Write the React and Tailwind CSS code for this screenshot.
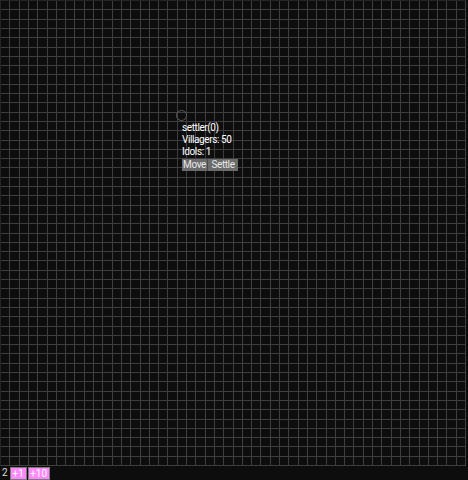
import React from "react";

const cells = Array.from({ length: 2500 });

export default function App() {
  return (
    <div className="w-[468px] h-[480px] bg-[#0d0d0d] text-white" style={{ fontFamily: "Roboto, 'Liberation Sans', sans-serif" }}>
      <div className="relative w-[466px] h-[466px] border-l border-t border-[#262626] grid grid-cols-[repeat(50,1fr)] grid-rows-[repeat(50,1fr)]">
        {cells.map((_, i) => (
          <div key={i} className="border-r border-b border-[#3e3e3e]" />
        ))}
        <div className="absolute left-[175px] top-[109px] flex flex-col items-start">
          <div className="w-[11px] h-[11px] rounded-full border border-[#5a5a5a]" />
          <div className="ml-[6px] mt-[1px] text-[10px] leading-[12px] tracking-[-0.4px] flex flex-col">
            <span>settler(0)</span>
            <span>Villagers: 50</span>
            <span>Idols: 1</span>
            <div className="flex mt-[1px]">
              <button className="h-[12px] w-[25px] bg-[#6b6b6b] text-[#e8e8e8] text-[10px] leading-[12px] tracking-[-0.4px] flex items-center justify-center">Move</button>
              <div className="w-[1px] h-[12px] bg-[#4a4a4a]" />
              <button className="h-[12px] w-[30px] bg-[#6b6b6b] text-[#e8e8e8] text-[10px] leading-[12px] tracking-[-0.4px] flex items-center justify-center">Settle</button>
            </div>
          </div>
        </div>
      </div>
      <div className="flex items-center h-[14px] text-[10px] leading-[12px]">
        <span className="ml-[2px] mr-[2px] text-[#ddd]">2</span>
        <button className="h-[13px] w-[17px] bg-[#ff88ff] border border-[#7a7a7a] text-white text-[10px] leading-[11px] flex items-center justify-center">+1</button>
        <button className="ml-[1px] h-[13px] w-[22px] bg-[#ff88ff] border border-[#7a7a7a] text-white text-[10px] leading-[11px] flex items-center justify-center">+10</button>
      </div>
    </div>
  );
}
